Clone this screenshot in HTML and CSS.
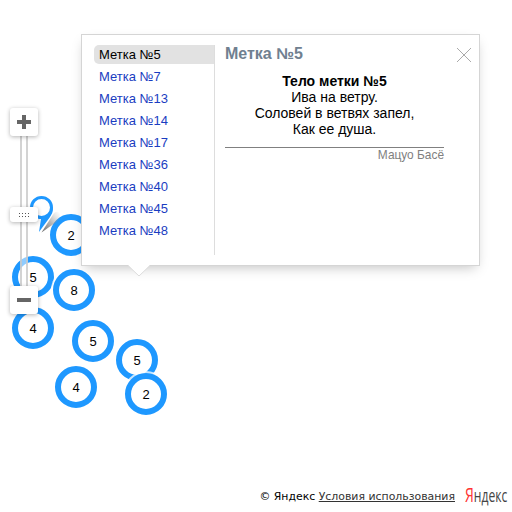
FILE: index.html
```
<!DOCTYPE html>
<html lang="ru">
<head>
<meta charset="utf-8">
<title>Карта</title>
<link rel="stylesheet" href="styles.css">
</head>
<body>
<main class="map">
  <div class="cluster" style="left:50px;top:214px">2</div>
  <div class="cluster" style="left:12px;top:256px">5</div>
  <div class="cluster" style="left:53px;top:269px">8</div>
  <div class="cluster" style="left:12px;top:307px">4</div>
  <div class="cluster" style="left:72px;top:320px">5</div>
  <div class="cluster" style="left:116px;top:339px">5</div>
  <div class="cluster" style="left:55px;top:366px">4</div>
  <div class="cluster" style="left:125px;top:373px">2</div>
  <svg class="pin" width="36" height="42" viewBox="0 0 36 42">
    <defs><linearGradient id="shade" x1="0" y1="1" x2="1" y2="0"><stop offset="0" stop-color="#555" stop-opacity=".9"/><stop offset=".5" stop-color="#888" stop-opacity=".6"/><stop offset="1" stop-color="#bbb" stop-opacity="0"/></linearGradient></defs>
    <path d="M11.5 37.5L24 18Q28 15 30 19Q30 24 25 28Z" fill="url(#shade)"/>
    <path d="M9 37L11 24L7 20L23 13Q23 18 20 22Z" fill="#1e98ff"/>
    <circle cx="11.5" cy="12.5" r="10" fill="#fff" stroke="#1e98ff" stroke-width="3"/>
  </svg>

  <div class="zoom">
    <div class="track"></div>
    <div class="zoom-btn"><svg width="14" height="14"><path d="M5 0h4v5h5v4h-5v5h-4v-5h-5v-4h5z"/></svg></div>
    <div class="slider"><svg width="11" height="4"><path d="M0 .5h11M0 3.5h11" fill="none" stroke="#555" stroke-dasharray="1 2"/></svg></div>
    <div class="zoom-btn"><svg width="14" height="4"><path d="M0 0h14v4H0z"/></svg></div>
  </div>

  <section class="balloon">
    <ul class="menu">
      <li class="item current">Метка №5</li>
      <li class="item">Метка №7</li>
      <li class="item">Метка №13</li>
      <li class="item">Метка №14</li>
      <li class="item">Метка №17</li>
      <li class="item">Метка №36</li>
      <li class="item">Метка №40</li>
      <li class="item">Метка №45</li>
      <li class="item">Метка №48</li>
    </ul>
    <article class="content">
      <h2 class="title">Метка №5</h2>
      <div class="body"><b>Тело метки №5</b><br>Ива на ветру.<br>Соловей в ветвях запел,<br>Как ее душа.</div>
      <div class="author">Мацуо Басё</div>
    </article>
    <svg class="close" width="14" height="14"><path d="M0 0L14 14M14 0L0 14" stroke="#aaa" fill="none"/></svg>
    <svg class="tail" width="22" height="12"><path d="M0 0H22L11 11Z" fill="#fff"/><path d="M0 .5L11 11L22 .5" fill="none" stroke="#ddd"/></svg>
  </section>

  <footer class="copyright">
    <span class="legal">© Яндекс <a class="terms">Условия использования</a></span>
    <span class="logo"><span class="logo-text"><span class="red">Я</span>ндекс</span></span>
  </footer>
</main>
</body>
</html>
```
FILE: styles.css
```
body { margin: 0; background: #fff; font-family: "Liberation Sans", Arial, sans-serif; color: #000; }
.map { position: relative; width: 512px; height: 512px; overflow: hidden; }
.cluster {
  position: absolute; box-sizing: border-box; width: 42px; height: 42px;
  border: 6px solid #1e98ff; border-radius: 50%; background: #fff;
  box-shadow: 0 0 0 2px rgba(255,255,255,.75);
  font-size: 13px; line-height: 31px; text-align: center;
}
.pin { position: absolute; left: 30px; top: 195px; }
.zoom {
  position: absolute; left: 10px; top: 108px; width: 28px; height: 206px;
  display: flex; flex-direction: column; justify-content: space-between;
}
.track {
  position: absolute; left: 10px; top: 20px; bottom: 20px; box-sizing: border-box; width: 8px;
  border: solid rgba(200,200,200,.8); border-width: 0 2px; background: rgba(255,255,255,.5);
}
.zoom-btn, .slider {
  position: relative; display: flex; align-items: center; justify-content: center;
  background: #fff; border-radius: 3px; box-shadow: 0 1px 4px rgba(0,0,0,.3);
}
.zoom-btn { height: 28px; fill: #666; }
.slider { height: 15px; margin-top: 7px; }
.balloon {
  position: absolute; left: 81px; top: 34px; box-sizing: border-box; width: 399px; height: 232px;
  display: flex; padding: 10px 0 10px 12px; background: #fff; border: 1px solid #d5d5d5;
  box-shadow: 0 5px 12px -4px rgba(0,0,0,.26);
}
.menu {
  box-sizing: border-box; width: 121px; height: 210px; margin: 0; padding: 0;
  list-style: none; border-right: 1px solid #ddd;
}
.item { height: 19px; margin-bottom: 3px; padding-left: 5px; font-size: 13px; line-height: 19px; color: #1a3dc1; }
.current { background: #e2e2e2; border-radius: 5px 0 0 5px; color: #000; }
.content { width: 219px; margin-left: 10px; }
.title { margin: 0; font-size: 16px; line-height: 18px; color: #708090; }
.body { margin-top: 10px; padding-bottom: 10px; border-bottom: 1px solid #808080; font-size: 14px; line-height: 16px; text-align: center; }
.author { font-size: 11.9px; line-height: 14px; color: #808080; text-align: right; }
.close { position: absolute; right: 8px; top: 13px; }
.tail { position: absolute; left: 46px; top: 230px; }
.copyright {
  position: absolute; right: 5px; bottom: 7px; height: 18px; display: flex; align-items: center; gap: 10px;
  font: 10.9px "DejaVu Sans", sans-serif; white-space: nowrap;
}
.terms { color: #333; text-decoration: underline; }
.logo { width: 42px; height: 22px; }
.logo-text { display: inline-block; font: 17.3px/20px "Open Sans", sans-serif; color: #444; transform: scaleX(.7); transform-origin: 0 50%; }
.red { color: #f33; font-size: 20px; }
```
